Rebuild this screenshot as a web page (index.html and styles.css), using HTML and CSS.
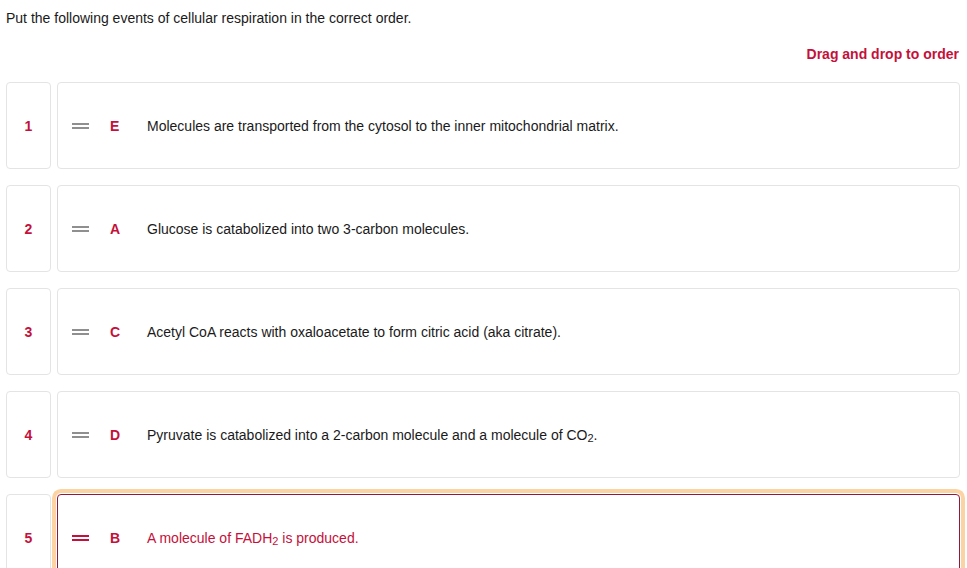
FILE: index.html
```html
<!DOCTYPE html>
<html>
<head>
<meta charset="utf-8">
<link rel="stylesheet" href="styles.css">
</head>
<body>
<div class="page">
  <p class="prompt">Put the following events of cellular respiration in the correct order.</p>
  <div class="hint">Drag and drop to order</div>
  <ol class="list">
    <li class="row">
      <div class="num">1</div>
      <div class="card">
        <span class="handle"></span>
        <span class="letter">E</span>
        <span class="text">Molecules are transported from the cytosol to the inner mitochondrial matrix.</span>
      </div>
    </li>
    <li class="row">
      <div class="num">2</div>
      <div class="card">
        <span class="handle"></span>
        <span class="letter">A</span>
        <span class="text">Glucose is catabolized into two 3-carbon molecules.</span>
      </div>
    </li>
    <li class="row">
      <div class="num">3</div>
      <div class="card">
        <span class="handle"></span>
        <span class="letter">C</span>
        <span class="text">Acetyl CoA reacts with oxaloacetate to form citric acid (aka citrate).</span>
      </div>
    </li>
    <li class="row">
      <div class="num">4</div>
      <div class="card">
        <span class="handle"></span>
        <span class="letter">D</span>
        <span class="text">Pyruvate is catabolized into a 2-carbon molecule and a molecule of CO<sub>2</sub>.</span>
      </div>
    </li>
    <li class="row">
      <div class="num">5</div>
      <div class="card selected">
        <span class="handle"></span>
        <span class="letter">B</span>
        <span class="text">A molecule of FADH<sub>2</sub> is produced.</span>
      </div>
    </li>
  </ol>
</div>
</body>
</html>
```

FILE: styles.css
```css
html, body {
  margin: 0;
  padding: 0;
  background: #fff;
}
body {
  font-family: "Liberation Sans", Arial, sans-serif;
  font-size: 14px;
  color: #1a1a1a;
  overflow: hidden;
}
.page {
  padding: 10px 7px 0 6px;
}
.prompt {
  margin: 0;
  line-height: 17px;
}
.hint {
  margin-top: 19px;
  text-align: right;
  padding-right: 1px;
  font-weight: bold;
  color: #c4103a;
  line-height: 17px;
}
.list {
  list-style: none;
  margin: 19px 0 0 0;
  padding: 0;
  display: flex;
  flex-direction: column;
  gap: 16px;
}
.row {
  display: flex;
  gap: 6px;
  height: 87px;
}
.num {
  width: 45px;
  flex: none;
  border: 1px solid #e4e4e4;
  border-radius: 4px;
  display: flex;
  align-items: center;
  justify-content: center;
  font-weight: bold;
  color: #c4103a;
  box-sizing: border-box;
}
.card {
  flex: 1;
  border: 1px solid #e4e4e4;
  border-radius: 4px;
  display: flex;
  align-items: center;
  box-sizing: border-box;
  padding-left: 14px;
}
.card.selected {
  border-color: #8e1a40;
  box-shadow: 0 0 0 1px #fff, 0 0 0 5px #fcd3a2;
  color: #c4103a;
}
.handle {
  width: 17px;
  height: 6px;
  border-top: 2px solid #8f8f8f;
  border-bottom: 2px solid #8f8f8f;
  box-sizing: border-box;
  flex: none;
}
.selected .handle {
  border-color: #c4103a;
}
.letter {
  width: 10px;
  margin-left: 21px;
  font-weight: bold;
  color: #c4103a;
  flex: none;
}
.text {
  margin-left: 27px;
}
sub {
  font-size: 11px;
  vertical-align: -2px;
  line-height: 0;
}
```
